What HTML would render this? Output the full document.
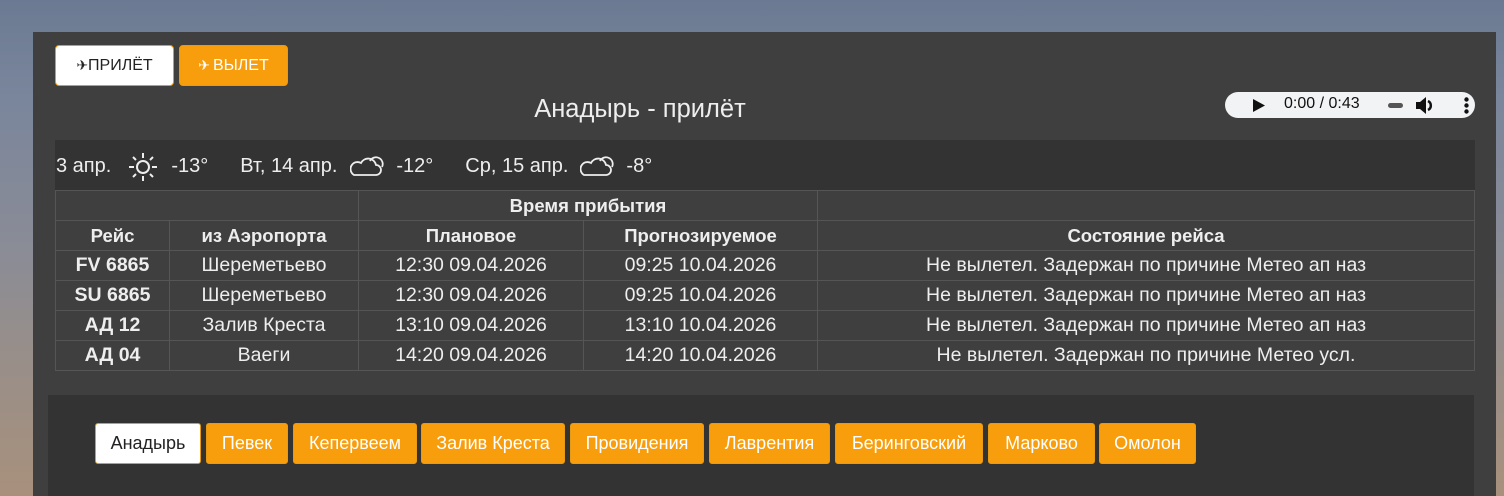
<!DOCTYPE html>
<html style="width:1504px;height:496px;overflow:hidden"><head><meta charset="utf-8"><style>
*{box-sizing:border-box;margin:0;padding:0}
body{width:1504px;height:496px;overflow:hidden;font-family:"Liberation Sans",sans-serif;background:linear-gradient(180deg,#6b7a92 0%,#7a869c 20%,#8a8c96 50%,#9a8f88 75%,#a8907c 100%);position:relative}
.panel{position:absolute;left:33px;top:32px;width:1463px;height:464px;background:#3f3f3f}
.btn{position:absolute;height:41px;border-radius:4px;font-size:16px;display:flex;align-items:center;justify-content:center;border:1px solid #e89a10}
.w{background:#fff;color:#222}
.o{background:#f89e0d;color:#fff}
.title{position:absolute;left:0;width:1280px;top:95px;text-align:center;color:#eee;font-size:25.5px}
.audio{position:absolute;left:1225px;top:92px;width:250px;height:26px;background:#f1f3f4;border-radius:13px;font-size:16px;color:#111}
.weather{position:absolute;left:55px;top:140px;width:1420px;height:50px;background:#333;color:#eee;font-size:20px;display:flex;align-items:center;padding-top:3px}
table{position:absolute;left:55px;top:190px;width:1420px;border-collapse:collapse;color:#eee;font-size:19.5px;border-top:1px solid #ddd}
td{border:1px solid #555;height:30px;text-align:center;padding:0}
th{border:1px solid #555;height:30px;font-weight:bold;font-size:18.5px;padding:0}
.bot{position:absolute;left:48px;top:395px;width:1426px;height:101px;background:#333}
.bb{position:absolute;top:423px;height:41px;border-radius:3px;font-size:18px;display:flex;align-items:center;justify-content:center;border:1px solid #e89a10}
</style></head><body>
<div class="panel"></div>
<div class="btn w" style="left:55px;top:45px;width:119px"><span style="font-size:14px">✈</span>ПРИЛЁТ</div>
<div class="btn o" style="left:179px;top:45px;width:109px"><span style="font-size:14px;margin-right:3px">✈</span>ВЫЛЕТ</div>
<div class="title">Анадырь - прилёт</div>
<div class="audio">
<svg style="position:absolute;left:28px;top:7px" width="12" height="13"><path d="M0 0L12 6.5L0 13Z" fill="#111"/></svg>
<span style="position:absolute;left:59px;top:3px">0:00 / 0:43</span>
<div style="position:absolute;left:163px;top:11px;width:15px;height:5px;border-radius:3px;background:#555"></div>
<svg style="position:absolute;left:191px;top:5px" width="20" height="17"><path d="M0 5H4L10 0V17L4 12H0Z" fill="#111"/><path d="M12 4A5 5 0 0 1 12 13" stroke="#111" stroke-width="2.5" fill="none"/></svg>
<svg style="position:absolute;left:239px;top:5px" width="5" height="17"><circle cx="2.5" cy="2.5" r="2.2" fill="#111"/><circle cx="2.5" cy="8.5" r="2.2" fill="#111"/><circle cx="2.5" cy="14.5" r="2.2" fill="#111"/></svg>
</div>
<div class="weather">
<span style="margin-left:1px">3 апр.</span>
<svg style="margin-left:16px" width="32" height="32" viewBox="0 0 32 32" fill="none" stroke="#eee" stroke-width="2"><circle cx="16" cy="16" r="6"/><path d="M16 2v5M16 25v5M2 16h5M25 16h5M6 6l3 3M23 23l3 3M6 26l3-3M23 9l3-3"/></svg>
<span style="margin-left:12px">-13°</span>
<span style="margin-left:32px">Вт, 14 апр.</span>
<svg style="margin-left:13px" width="34" height="24" viewBox="0 0 34 24" fill="none" stroke="#eee" stroke-width="1.8"><path d="M4 20H26A5 5 0 0 0 26 10A8 8 0 0 0 11 8A6 6 0 0 0 4 20Z"/><path d="M20 6A6 6 0 0 1 32 12"/></svg>
<span style="margin-left:12px">-12°</span>
<span style="margin-left:32px">Ср, 15 апр.</span>
<svg style="margin-left:12px" width="34" height="24" viewBox="0 0 34 24" fill="none" stroke="#eee" stroke-width="1.8"><path d="M4 20H26A5 5 0 0 0 26 10A8 8 0 0 0 11 8A6 6 0 0 0 4 20Z"/><path d="M20 6A6 6 0 0 1 32 12"/></svg>
<span style="margin-left:12px">-8°</span>
</div>
<table>
<tr><th colspan="2" style="width:303px"></th><th colspan="2">Время прибытия</th><th style="width:657px"></th></tr>
<tr><th style="width:114px">Рейс</th><th style="width:189px">из Аэропорта</th><th style="width:225px">Плановое</th><th style="width:234px">Прогнозируемое</th><th>Состояние рейса</th></tr>
<tr><td><b>FV 6865</b></td><td>Шереметьево</td><td>12:30 09.04.2026</td><td>09:25 10.04.2026</td><td>Не вылетел. Задержан по причине Метео ап наз</td></tr>
<tr><td><b>SU 6865</b></td><td>Шереметьево</td><td>12:30 09.04.2026</td><td>09:25 10.04.2026</td><td>Не вылетел. Задержан по причине Метео ап наз</td></tr>
<tr><td><b>АД 12</b></td><td>Залив Креста</td><td>13:10 09.04.2026</td><td>13:10 10.04.2026</td><td>Не вылетел. Задержан по причине Метео ап наз</td></tr>
<tr><td><b>АД 04</b></td><td>Ваеги</td><td>14:20 09.04.2026</td><td>14:20 10.04.2026</td><td>Не вылетел. Задержан по причине Метео усл.</td></tr>
</table>
<div class="bot"></div>
<div class="bb w" style="left:95px;width:106px">Анадырь</div>
<div class="bb o" style="left:206px;width:82px">Певек</div>
<div class="bb o" style="left:293px;width:124px">Кепервеем</div>
<div class="bb o" style="left:421px;width:144px">Залив Креста</div>
<div class="bb o" style="left:570px;width:134px">Провидения</div>
<div class="bb o" style="left:709px;width:121px">Лаврентия</div>
<div class="bb o" style="left:835px;width:148px">Беринговский</div>
<div class="bb o" style="left:988px;width:107px">Марково</div>
<div class="bb o" style="left:1099px;width:97px">Омолон</div>
</body></html>
